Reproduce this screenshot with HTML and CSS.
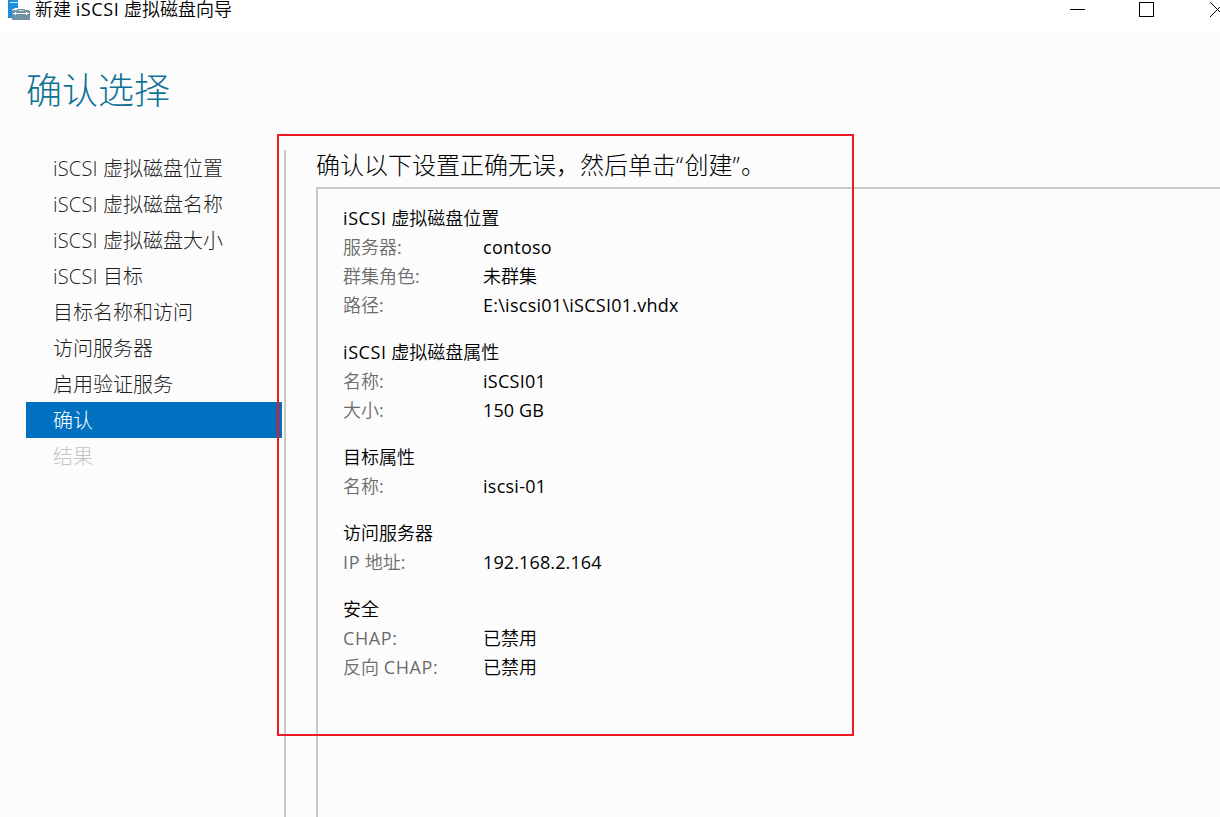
FILE: index.html
```html
<!DOCTYPE html>
<html lang="zh-CN">
<head>
<meta charset="utf-8">
<title>新建 iSCSI 虚拟磁盘向导</title>
<link rel="stylesheet" href="styles.css">
</head>
<body>
<div class="window">
  <header class="titlebar">
    <svg class="app-icon" width="24" height="22" viewBox="0 0 24 22">
      <path fill="#1e8fe0" d="M0 0h10v8H7l-3 2v8H0z"/>
      <path fill="#d6ebfa" d="M2 2h8v1H2z"/>
      <path fill="#7391a5" d="M9 9h8v1h4l1 1v9H4v-9l1-1h4z"/>
      <path fill="#c3d0d9" d="M10 10h6v1h-6z"/>
      <path fill="#fff" d="M5 13h16v1H5zM7 12h1v3H7zM18 12h1v3h-1z"/>
    </svg>
    <span class="title">新建 <span class="latin">iSCSI</span> 虚拟磁盘向导</span>
    <svg class="controls" width="152" height="18" viewBox="0 0 152 18" fill="none" stroke="#000" shape-rendering="crispEdges">
      <path d="M2 9.5h15"/>
      <path d="M71.5 2.5h14v14h-14z"/>
      <path shape-rendering="auto" d="M142 2l15 15M142 17l15-15"/>
    </svg>
  </header>
  <h1 class="heading">确认选择</h1>
  <div class="body">
    <nav class="steps">
      <div class="step"><span class="latin">iSCSI</span> 虚拟磁盘位置</div>
      <div class="step"><span class="latin">iSCSI</span> 虚拟磁盘名称</div>
      <div class="step"><span class="latin">iSCSI</span> 虚拟磁盘大小</div>
      <div class="step"><span class="latin">iSCSI</span> 目标</div>
      <div class="step">目标名称和访问</div>
      <div class="step">访问服务器</div>
      <div class="step">启用验证服务</div>
      <div class="step current">确认</div>
      <div class="step disabled">结果</div>
    </nav>
    <main class="content">
      <p class="prompt">确认以下设置正确无误，然后单击<span class="quote">“</span>创建<span class="quote">”</span>。</p>
      <div class="panel">
        <section class="group">
          <h2><span class="latin">iSCSI</span> 虚拟磁盘位置</h2>
          <dl>
            <dt>服务器:</dt><dd><span class="latin">contoso</span></dd>
            <dt>群集角色:</dt><dd>未群集</dd>
            <dt>路径:</dt><dd><span class="latin">E:\iscsi01\iSCSI01.vhdx</span></dd>
          </dl>
        </section>
        <section class="group">
          <h2><span class="latin">iSCSI</span> 虚拟磁盘属性</h2>
          <dl>
            <dt>名称:</dt><dd><span class="latin">iSCSI01</span></dd>
            <dt>大小:</dt><dd><span class="number">150 GB</span></dd>
          </dl>
        </section>
        <section class="group">
          <h2>目标属性</h2>
          <dl>
            <dt>名称:</dt><dd><span class="latin">iscsi-01</span></dd>
          </dl>
        </section>
        <section class="group">
          <h2>访问服务器</h2>
          <dl>
            <dt><span class="latin">IP</span> 地址:</dt><dd><span class="number">192.168.2.164</span></dd>
          </dl>
        </section>
        <section class="group">
          <h2>安全</h2>
          <dl>
            <dt><span class="latin">CHAP:</span></dt><dd>已禁用</dd>
            <dt>反向 <span class="latin">CHAP:</span></dt><dd>已禁用</dd>
          </dl>
        </section>
      </div>
    </main>
  </div>
  <div class="highlight"></div>
</div>
</body>
</html>
```
FILE: styles.css
```css
* { box-sizing: border-box; margin: 0; padding: 0; }
body {
  background: #fcfcfc;
  color: #000;
  font-family: "Open Sans", "Noto Sans CJK SC", sans-serif;
  overflow: hidden;
}
.window {
  position: relative;
  display: flex;
  flex-direction: column;
  width: 1220px;
  height: 817px;
  overflow: hidden;
}
.titlebar {
  display: flex;
  align-items: flex-start;
  height: 32px;
  padding-left: 8px;
  background: #fff;
}
.app-icon { margin-right: 3px; }
.title {
  font-family: "Open Sans", "Noto Sans CJK SC DemiLight", "Noto Sans CJK SC", sans-serif;
  font-size: 18px;
  line-height: 18px;
  white-space: nowrap;
}
.controls { margin-left: auto; }
.heading {
  height: 118px;
  padding: 35px 0 0 26px;
  color: #0f7296;
  font-size: 36px;
  font-weight: 300;
  line-height: 48px;
}
.body { display: flex; flex: 1; min-height: 0; }
.steps { width: 256px; margin-left: 26px; }
.step {
  height: 36px;
  padding: 1px 0 0 27px;
  color: #1c1c1c;
  font-size: 20px;
  font-weight: 300;
  line-height: 36px;
  white-space: nowrap;
}
.step .latin { letter-spacing: 0.2px; }
.step.current { background: #0070c0; color: #fff; }
.step.disabled { color: #c4c4c4; }
.content {
  display: flex;
  flex: 1;
  flex-direction: column;
  margin-left: 2px;
  padding-left: 30px;
  border-left: 2px solid #c8c8c8;
}
.prompt {
  height: 37px;
  font-size: 24px;
  font-weight: 300;
  line-height: 30px;
  white-space: nowrap;
}
.quote { letter-spacing: 1.3px; }
.panel {
  flex: 1;
  padding: 15px 0 0 25px;
  border-top: 2px solid #c8c8c8;
  border-left: 2px solid #c8c8c8;
}
.group {
  margin-bottom: 18px;
  font-family: "Open Sans", "Noto Sans CJK SC DemiLight", "Noto Sans CJK SC", sans-serif;
  font-size: 18px;
  line-height: 29px;
}
.group h2 { height: 29px; font-size: 18px; font-weight: 400; }
.group dl { display: grid; grid-template-columns: 140px 1fr; grid-auto-rows: 29px; }
.group dt { color: #6c6c6c; }
.title .latin, .group h2 .latin, .group dt .latin { letter-spacing: 0.6px; }
.group dd .latin { letter-spacing: 0.26px; }
.group dd .number { letter-spacing: 0.12px; }
.highlight {
  position: absolute;
  left: 277px;
  top: 134px;
  width: 577px;
  height: 602px;
  border: 2px solid #ed1c24;
}
```
